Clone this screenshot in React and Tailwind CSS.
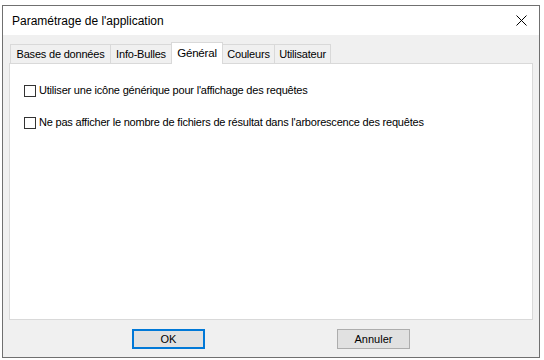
import React from "react";

const font = { fontFamily: '"Segoe UI", "Liberation Sans", Arial, sans-serif' };

function Tab({ label, selected, w, first }) {
  if (selected) {
    return (
      <div
        className={`relative z-10 -mb-px -ml-px flex h-[22px] items-start justify-center border border-b-0 border-[#d9d9d9] bg-white pt-[2px] text-[11.5px] tracking-[-0.2px] text-black ${w}`}
      >
        {label}
      </div>
    );
  }
  return (
    <div
      className={`flex h-[19px] items-center justify-center border border-b-0 border-[#d9d9d9] bg-[#f0f0f0] text-[11px] tracking-[-0.2px] text-black ${first ? "" : "-ml-px"} ${w}`}
    >
      {label}
    </div>
  );
}

function Check({ label }) {
  return (
    <div className="flex h-[13px] items-center gap-[3px]">
      <div className="h-[12px] w-[12px] shrink-0 border border-[#333333] bg-white" />
      <span className="whitespace-nowrap text-[11px] tracking-[-0.2px] text-black">{label}</span>
    </div>
  );
}

export default function App() {
  return (
    <div className="h-[360px] w-[544px] bg-white pl-[2px] pt-[5px]" style={font}>
      <div className="flex h-[353px] w-[538px] flex-col border border-[#707070] bg-[#f0f0f0]">
        <div className="flex h-[29px] items-center justify-between bg-white pl-[9px] pr-[12px]">
          <span className="text-[12px] text-black">Paramétrage de l'application</span>
          <svg width="11" height="11" viewBox="0 0 11 11">
            <path d="M0.5 0.5 L10.5 10.5 M10.5 0.5 L0.5 10.5" stroke="#000" strokeWidth="1" />
          </svg>
        </div>
        <div className="flex flex-1 flex-col px-[6px] pt-[7px]">
          <div className="flex h-[21px] items-end pl-[1px]">
            <Tab label="Bases de données" w="w-[101px]" first />
            <Tab label="Info-Bulles" w="w-[62px]" />
            <Tab label="Général" w="w-[52px]" selected />
            <Tab label="Couleurs" w="w-[53px]" />
            <Tab label="Utilisateur" w="w-[57px]" />
          </div>
          <div className="flex h-[257px] flex-col gap-[19px] border border-[#d9d9d9] bg-white pl-[14px] pt-[20px]">
            <Check label="Utiliser une icône générique pour l'affichage des requêtes" />
            <Check label="Ne pas afficher le nombre de fichiers de résultat dans l'arborescence des requêtes" />
          </div>
          <div className="flex justify-start pt-[9px]">
            <button className="ml-[123px] h-[20px] w-[73px] border-2 border-[#0078d7] bg-[#e1e1e1] text-[11px] text-black">
              OK
            </button>
            <button className="ml-[132px] h-[20px] w-[73px] border border-[#adadad] bg-[#e1e1e1] text-[11px] text-black">
              Annuler
            </button>
          </div>
        </div>
      </div>
    </div>
  );
}
